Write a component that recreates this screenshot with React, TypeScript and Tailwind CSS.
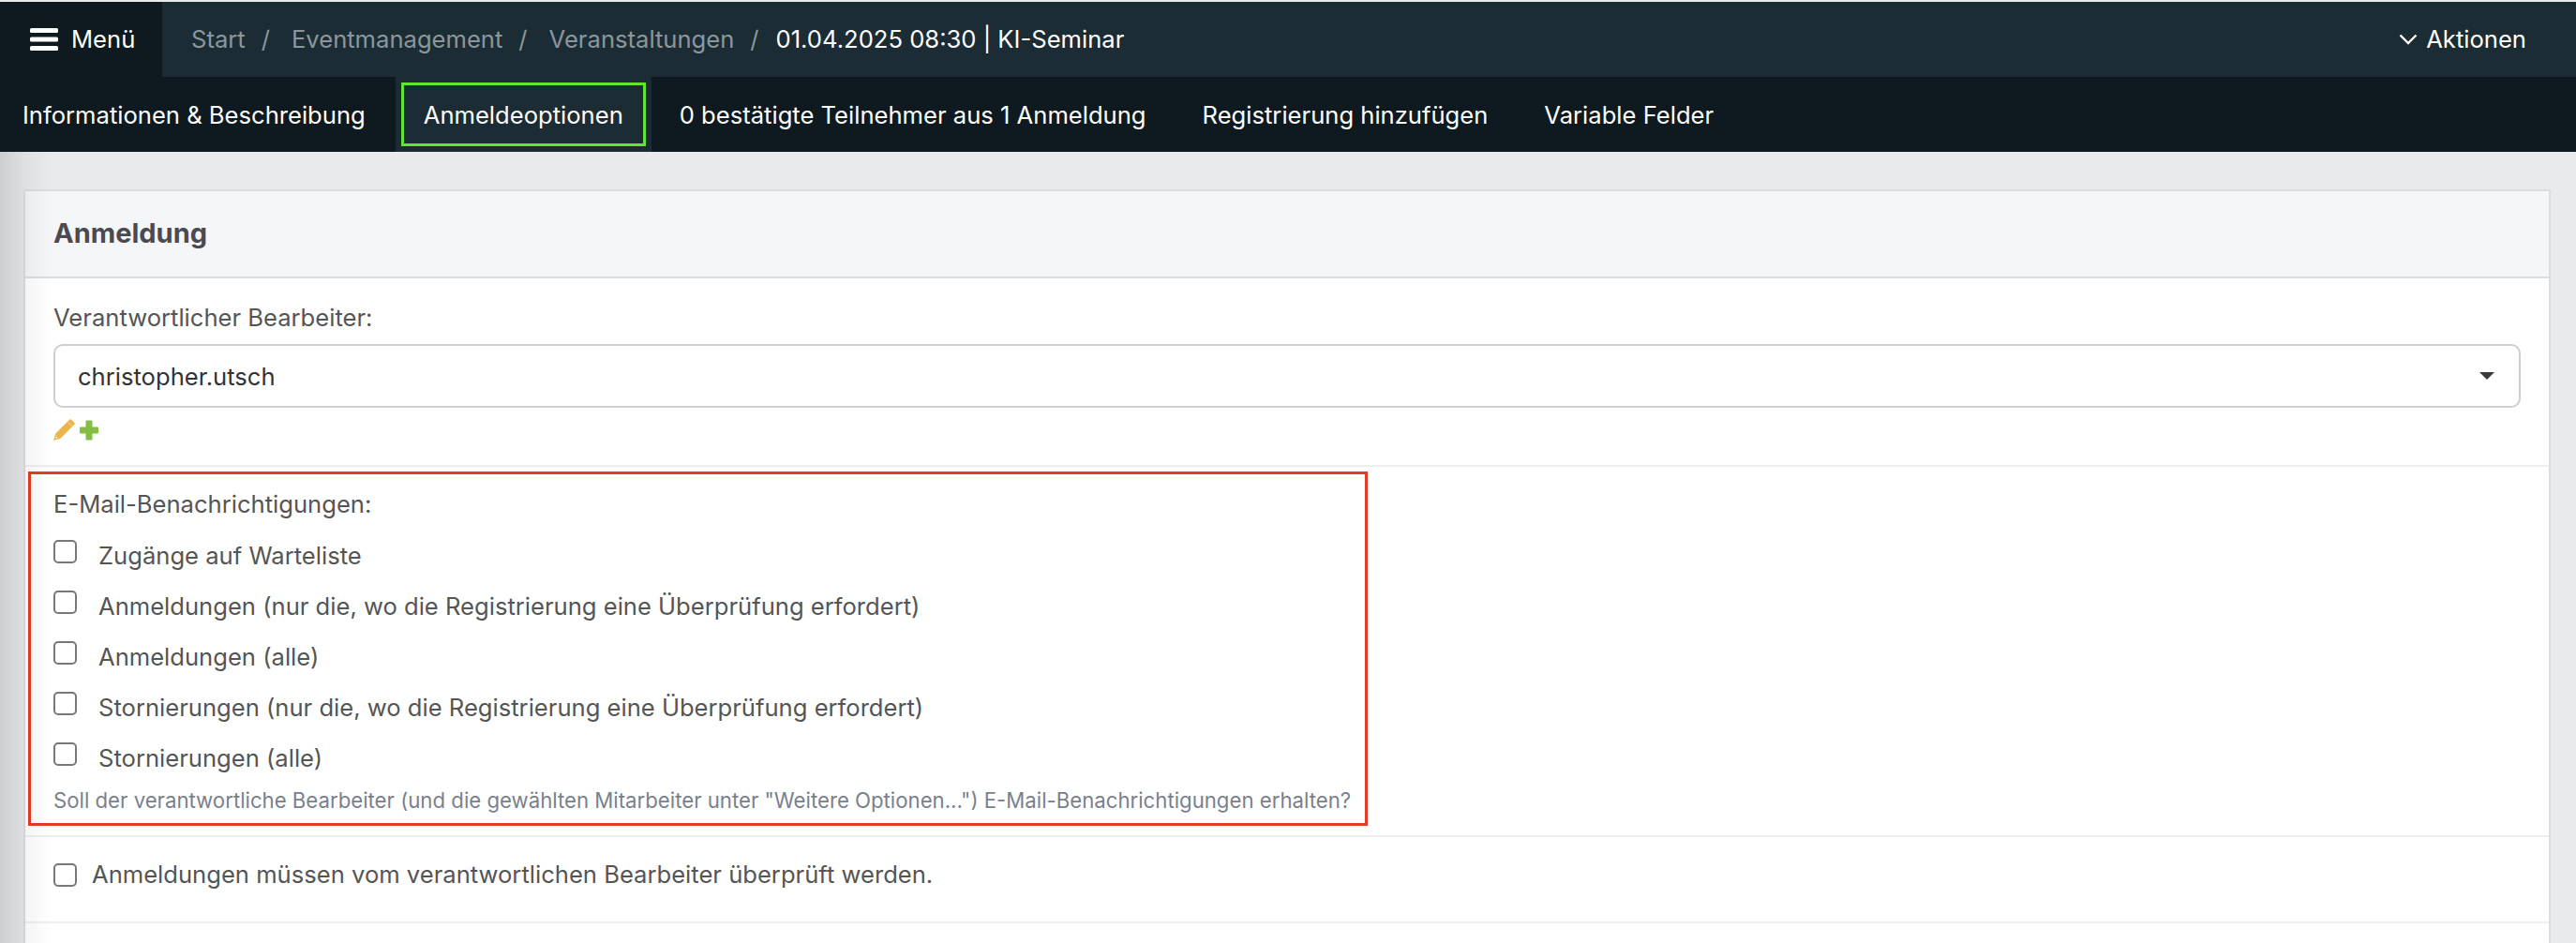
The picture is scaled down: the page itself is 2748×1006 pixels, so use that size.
import React from 'react';

const NAV_ITEMS = [
  'Informationen & Beschreibung',
  'Anmeldeoptionen',
  '0 bestätigte Teilnehmer aus 1 Anmeldung',
  'Registrierung hinzufügen',
  'Variable Felder',
];

const NOTIFICATIONS = [
  'Zugänge auf Warteliste',
  'Anmeldungen (nur die, wo die Registrierung eine Überprüfung erfordert)',
  'Anmeldungen (alle)',
  'Stornierungen (nur die, wo die Registrierung eine Überprüfung erfordert)',
  'Stornierungen (alle)',
];

const Checkbox = () => (
  <span className="block w-[25px] h-[25px] shrink-0 rounded-[5px] border-2 border-[#787878] bg-white" />
);

const Crumb = ({ label }: { label: string }) => (
  <>
    <span className="text-[#8b979c]">{label}</span>
    <span className="text-[#8b979c] ml-[17px] mr-[23px]">/</span>
  </>
);

export default function App() {
  return (
    <div className="relative h-[1006px] overflow-hidden bg-[#e9eaec] font-['Inter',sans-serif] text-[25.6px] leading-[40px]">
      {/* Top bar */}
      <div className="h-[80px] mt-[2px] flex items-stretch bg-[#1b2c34] text-white">
        <div className="w-[173px] flex items-center bg-[#0e1a1f] pl-[32px]">
          <svg width="30" height="26" viewBox="0 0 30 26" className="mr-[14px]">
            <rect x="0" y="1" width="30" height="5" rx="1.5" fill="#fff" />
            <rect x="0" y="10.5" width="30" height="5" rx="1.5" fill="#fff" />
            <rect x="0" y="20" width="30" height="5" rx="1.5" fill="#fff" />
          </svg>
          <span>Menü</span>
        </div>
        <div className="flex items-center pl-[31px]">
          <Crumb label="Start" />
          <Crumb label="Eventmanagement" />
          <Crumb label="Veranstaltungen" />
          <span className="-ml-[5px]">01.04.2025 08:30 | KI-Seminar</span>
        </div>
        <div className="ml-auto flex items-center pr-[53px]">
          <svg width="20" height="12" viewBox="0 0 20 12" className="mr-[9px]">
            <path d="M1.500 1.500L10 10L18.500 1.500" fill="none" stroke="#fff" strokeWidth="2.400" />
          </svg>
          <span>Aktionen</span>
        </div>
      </div>

      {/* Tabs */}
      <div className="h-[80px] flex items-stretch bg-[#0e1a1f] text-white -ml-[6px]">
        {NAV_ITEMS.map((item) =>
          item === 'Anmeldeoptionen' ? (
            <div key={item} className="ml-[2px] p-[6px] bg-[#1b2c34]">
              <div className="h-full flex items-center pt-[1px] px-[21px] border-[3px] border-[#62e436]">{item}</div>
            </div>
          ) : (
            <div key={item} className="flex items-center pt-[1px] px-[30px]">{item}</div>
          )
        )}
      </div>

      {/* Card */}
      <div className="mt-[40px] mr-[27px] ml-[25px] border-2 border-[#dcdde0] border-b-0 bg-white text-[#555]">
        <div className="h-[93px] flex items-center px-[30px] pb-[2px] bg-[#f5f6f8] border-b-2 border-[#dcdde0]">
          <h2 className="text-[29px] font-bold text-[#4a4b52]">Anmeldung</h2>
        </div>

        <div className="px-[30px] pt-[22px] h-[201px] border-b-2 border-[#efefef]">
          <div>Verantwortlicher Bearbeiter:</div>
          <div className="mt-[8px] h-[68px] flex items-center justify-between pl-[24px] pr-[26px] border-2 border-[#cfcfcf] rounded-[10px] text-[#333]">
            <span className="pt-[1px]">christopher.utsch</span>
            <span className="w-0 h-0 border-x-[8px] border-x-transparent border-t-[8px] border-t-[#3a3a3a]" />
          </div>
          <div className="mt-[12px] flex items-center gap-[4px]">
            <svg width="23" height="23" viewBox="0 0 23 23">
              <path fill="#ecb54a" d="M17 .8a1.600 1.600 0 0 1 2.200 0l3 3a1.600 1.600 0 0 1 0 2.200L7.500 20.700 0 23l2.300-7.500z" />
              <path fill="#fff" d="M2.900 18.300l1.800 1.800-2.400.6z" />
              <path fill="none" stroke="#fff" strokeWidth="0.800" strokeOpacity="0.6" d="M15.400 3.200l4.400 4.400" />
            </svg>
            <svg width="22" height="22" viewBox="0 0 22 22">
              <path fill="#84bd45" d="M7.500 1.500a1 1 0 0 1 1-1h5a1 1 0 0 1 1 1V7.500h5.500a1 1 0 0 1 1 1v5a1 1 0 0 1-1 1H14.500V20.500a1 1 0 0 1-1 1h-5a1 1 0 0 1-1-1V14.500H2a1 1 0 0 1-1-1v-5a1 1 0 0 1 1-1H7.500z" />
            </svg>
          </div>
        </div>

        <div className="h-[395px] pt-[5px] border-b-2 border-[#efefef]">
          <div className="w-[1429px] h-[378px] ml-[3px] border-[3px] border-[#e63b24] pl-[24px] pt-[12px]">
            <div>E-Mail-Benachrichtigungen:</div>
            <div className="mt-[15px] flex flex-col gap-[14px]">
              {NOTIFICATIONS.map((label) => (
                <div key={label} className="flex gap-[23px]">
                  <div className="pt-[3px]"><Checkbox /></div>
                  <span>{label}</span>
                </div>
              ))}
            </div>
            <div className="mt-[10px] text-[22.2px] leading-[30px] text-[#7a7f8e]">
              Soll der verantwortliche Bearbeiter (und die gewählten Mitarbeiter unter "Weitere Optionen...") E-Mail-Benachrichtigungen erhalten?
            </div>
          </div>
        </div>

        <div className="h-[92px] flex items-center gap-[16px] px-[30px] pb-[10px] border-b-2 border-[#efefef]">
          <Checkbox />
          <span>Anmeldungen müssen vom verantwortlichen Bearbeiter überprüft werden.</span>
        </div>
        <div className="h-[40px]" />
      </div>

      {/* Sidebar shadow */}
      <div className="absolute left-0 top-[162px] bottom-0 w-[56px] bg-gradient-to-r from-black/12 via-black/4 via-50% to-transparent pointer-events-none" />
    </div>
  );
}
